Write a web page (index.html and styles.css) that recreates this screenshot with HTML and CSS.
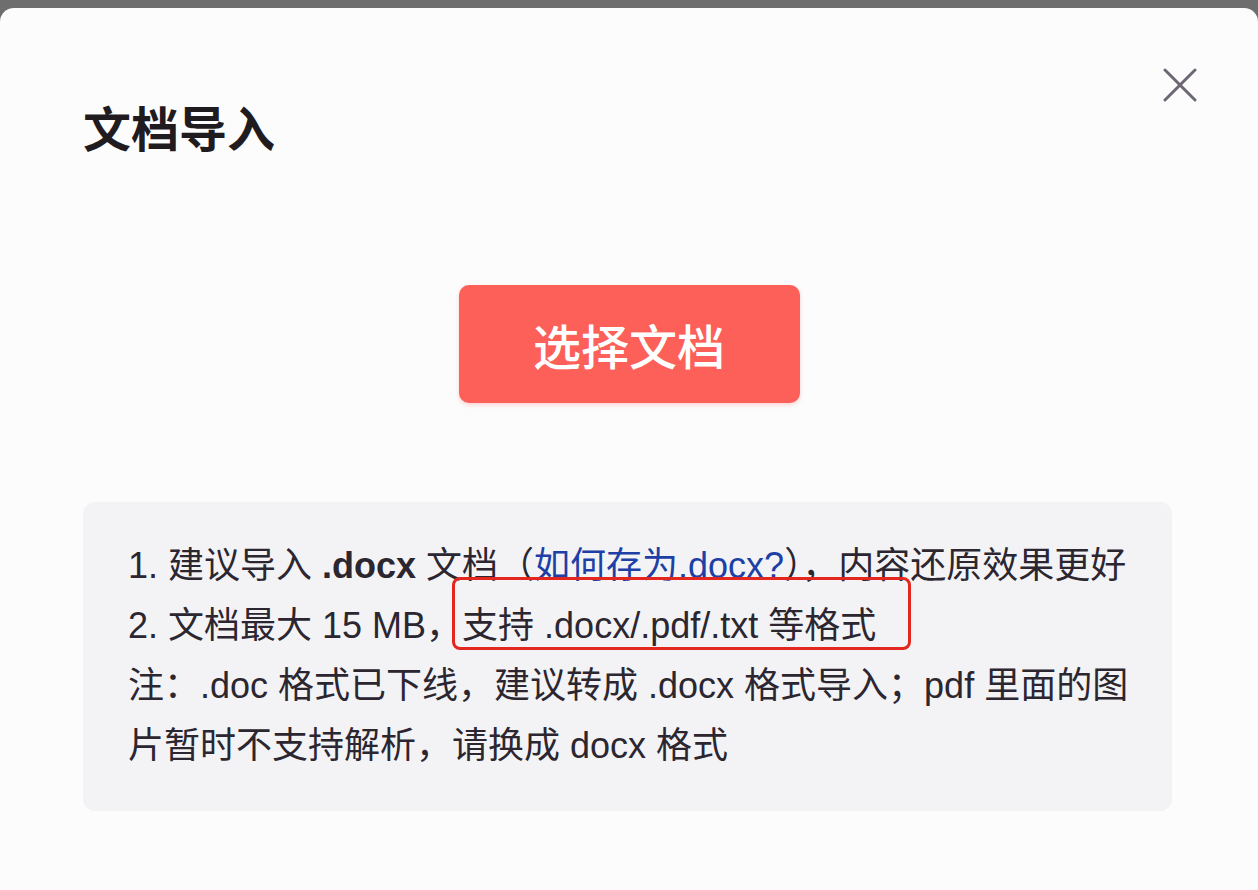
FILE: index.html
```html
<!DOCTYPE html>
<html lang="zh-CN">
<head>
<meta charset="utf-8">
<title>文档导入</title>
<link rel="stylesheet" href="styles.css">
</head>
<body>
<div class="dialog">
  <button class="close" aria-label="关闭">
    <svg width="34" height="34" viewBox="0 0 34 34"><path d="M2 2 L32 32 M32 2 L2 32" stroke="#6d6773" stroke-width="3" stroke-linecap="round" fill="none"/></svg>
  </button>
  <h1 class="title">文档导入</h1>
  <div class="actions">
    <button class="pick">选择文档</button>
  </div>
  <div class="info">
    <p class="line">1. 建议导入 <b>.docx</b> 文档（<a class="link" href="#">如何存为.docx?</a>），内容还原效果更好</p>
    <p class="line">2. 文档最大 15 MB，<span class="mark">支持 .docx/.pdf/.txt 等格式</span></p>
    <p class="line">注：.doc 格式已下线，建议转成 .docx 格式导入；pdf 里面的图<br>片暂时不支持解析，请换成 docx 格式</p>
  </div>
</div>
</body>
</html>
```

FILE: styles.css
```css
html, body {
  margin: 0;
  padding: 0;
}
body {
  background: #6e6e6e;
  font-family: "Liberation Sans", "Noto Sans CJK SC", sans-serif;
  padding-top: 8px;
  height: 890px;
  box-sizing: border-box;
  overflow: hidden;
}
.dialog {
  position: relative;
  background: #fcfcfd;
  border-radius: 14px 14px 0 0;
  height: 882px;
  padding: 94px 86px 0 83px;
  box-sizing: border-box;
}
.close {
  position: absolute;
  top: 60px;
  right: 61px;
  width: 34px;
  height: 34px;
  padding: 0;
  border: 0;
  background: none;
  display: flex;
}
.title {
  margin: 0;
  font-family: "Noto Sans CJK SC", sans-serif;
  font-size: 48px;
  line-height: 48px;
  font-weight: 700;
  color: #1f1b1f;
}
.actions {
  display: flex;
  justify-content: center;
  padding-top: 135px;
  padding-left: 3px;
}
.pick {
  width: 341px;
  height: 118px;
  border: 0;
  border-radius: 10px;
  background: #fd5f59;
  color: #ffffff;
  font-family: "Noto Sans CJK SC", sans-serif;
  font-size: 48px;
  font-weight: 500;
  box-shadow: 0 2px 4px rgba(253, 95, 89, 0.25);
}
.info {
  margin-top: 99px;
  background: #f3f3f5;
  border-radius: 12px;
  padding: 34px 45px 37px 45px;
  height: 309px;
  box-sizing: border-box;
}
.line {
  margin: 0;
  font-size: 36px;
  line-height: 60px;
  color: #2b2630;
  white-space: nowrap;
}
.line b {
  font-weight: 700;
  color: #2b2630;
}
.link {
  color: #1d3fa6;
  text-decoration: none;
}
.mark {
  position: relative;
}
.mark::after {
  content: "";
  position: absolute;
  left: -10px;
  right: -35px;
  top: -28px;
  bottom: -4px;
  border: 3px solid #e3271f;
  border-radius: 8px;
}
```
